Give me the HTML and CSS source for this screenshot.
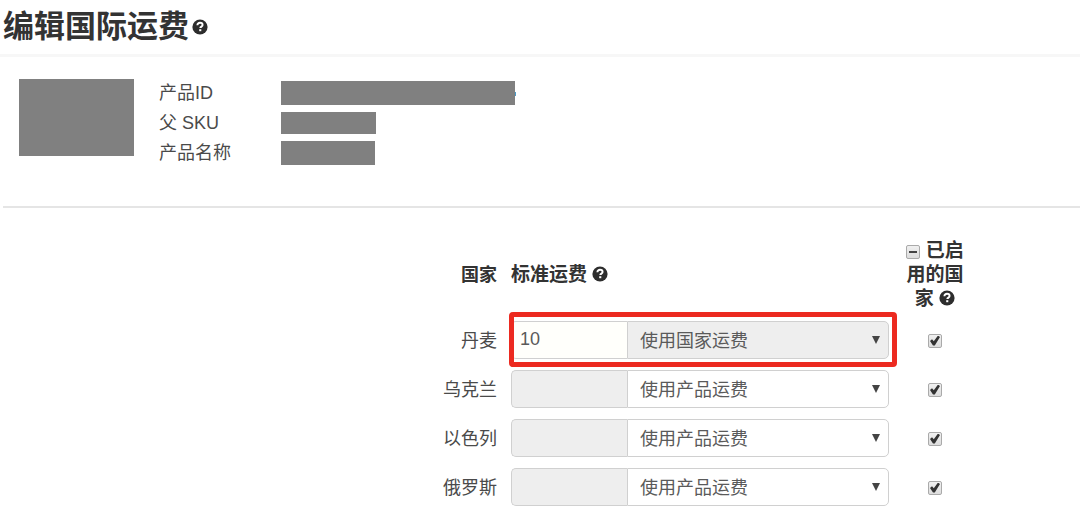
FILE: index.html
```html
<!DOCTYPE html>
<html lang="zh-CN">
<head>
    <meta charset="UTF-8">
    <meta name="viewport" content="width=device-width, initial-scale=1.0">
    <title>编辑国际运费</title>
    <link rel="stylesheet" href="styles.css">
</head>
<body>
    <svg class="icon-defs" aria-hidden="true">
        <symbol id="icon-help" viewBox="0 0 16 16">
            <circle cx="8" cy="8" r="7.6" fill="#2d2d2d"/>
            <path d="M5.4 6.3C5.4 4.7 6.5 3.8 8 3.8s2.6.9 2.6 2.2c0 1.6-2.3 1.6-2.3 3.1" fill="none" stroke="#fff" stroke-width="1.9"/>
            <rect x="7.2" y="10.2" width="2.1" height="2" fill="#fff"/>
        </symbol>
    </svg>

    <header class="page-header">
        <h1>编辑国际运费</h1>
        <svg class="help"><use href="#icon-help"/></svg>
    </header>

    <section class="product">
        <div class="product-image"></div>
        <dl class="product-info">
            <dt>产品ID</dt>
            <dd><span class="mask mask-id"></span></dd>
            <dt>父 SKU</dt>
            <dd><span class="mask mask-sku"></span></dd>
            <dt>产品名称</dt>
            <dd><span class="mask mask-name"></span></dd>
        </dl>
    </section>

    <table class="shipping">
        <thead>
            <tr>
                <th class="country">国家</th>
                <th class="price">标准运费 <svg class="help"><use href="#icon-help"/></svg></th>
                <th class="enabled"><input type="checkbox" class="check partial" id="all"> <label for="all">已启用的国家</label> <svg class="help"><use href="#icon-help"/></svg></th>
            </tr>
        </thead>
        <tbody>
            <tr>
                <td class="country"><label for="dk">丹麦</label></td>
                <td class="price">
                    <div class="input-group active">
                        <input type="text" id="dk" class="amount" value="10">
                        <div class="mode">
                            <select aria-label="丹麦运费"><option>使用国家运费</option><option>使用产品运费</option></select>
                        </div>
                    </div>
                </td>
                <td class="enabled"><input type="checkbox" class="check" aria-label="丹麦" checked></td>
            </tr>
            <tr>
                <td class="country"><label for="ua">乌克兰</label></td>
                <td class="price">
                    <div class="input-group">
                        <input type="text" id="ua" class="amount" disabled>
                        <div class="mode">
                            <select aria-label="乌克兰运费"><option>使用产品运费</option><option>使用国家运费</option></select>
                        </div>
                    </div>
                </td>
                <td class="enabled"><input type="checkbox" class="check" aria-label="乌克兰" checked></td>
            </tr>
            <tr>
                <td class="country"><label for="il">以色列</label></td>
                <td class="price">
                    <div class="input-group">
                        <input type="text" id="il" class="amount" disabled>
                        <div class="mode">
                            <select aria-label="以色列运费"><option>使用产品运费</option><option>使用国家运费</option></select>
                        </div>
                    </div>
                </td>
                <td class="enabled"><input type="checkbox" class="check" aria-label="以色列" checked></td>
            </tr>
            <tr>
                <td class="country"><label for="ru">俄罗斯</label></td>
                <td class="price">
                    <div class="input-group">
                        <input type="text" id="ru" class="amount" disabled>
                        <div class="mode">
                            <select aria-label="俄罗斯运费"><option>使用产品运费</option><option>使用国家运费</option></select>
                        </div>
                    </div>
                </td>
                <td class="enabled"><input type="checkbox" class="check" aria-label="俄罗斯" checked></td>
            </tr>
        </tbody>
    </table>
</body>
</html>
```

FILE: styles.css
```css
* {
    box-sizing: border-box;
}

body {
    margin: 0;
    font-family: "Liberation Sans", "Noto Sans CJK SC", sans-serif;
    font-size: 18px;
    line-height: 24px;
    color: #4a4a4a;
    background-color: #fff;
}

.icon-defs {
    display: none;
}

.help {
    width: 16px;
    height: 16px;
}

.page-header {
    display: flex;
    align-items: center;
    gap: 3px;
    padding: 5px 3px;
    border-bottom: 3px solid #f7f7f7;
}

h1 {
    margin: 0;
    font-size: 31px;
    line-height: 44px;
    color: #333;
}

.product {
    display: flex;
    gap: 25px;
    margin-left: 3px;
    padding: 21px 16px 38px;
    border-bottom: 2px solid #e5e5e5;
}

.product-image {
    width: 115px;
    height: 77px;
    margin-top: 1px;
    background-color: #808080;
}

.product-info {
    display: grid;
    grid-template-columns: 122px 1fr;
    grid-auto-rows: 30px;
    align-items: center;
    flex: 1;
    margin: 0;
}

.product-info dd {
    margin: 0;
}

.mask {
    display: block;
    height: 24px;
    background-color: #808080;
}

.mask-id {
    position: relative;
    width: 234px;
}

/* 遮挡块右侧露出的链接边缘 */
.mask-id::after {
    content: "";
    position: absolute;
    top: 11px;
    right: -1px;
    width: 1px;
    height: 4px;
    background-color: #4a9bc9;
}

.mask-sku {
    width: 95px;
    height: 22px;
}

.mask-name {
    width: 94px;
}

.shipping {
    width: 850px;
    max-width: 100%;
    margin: 30px auto 0;
    border-collapse: collapse;
}

.shipping th,
.shipping td {
    padding: 0;
}

.shipping th {
    height: 77px;
    padding-bottom: 3px;
    color: #333;
}

.shipping td {
    height: 49px;
}

.shipping .country {
    padding-right: 14px;
    text-align: right;
}

.shipping td.country {
    padding-top: 2px;
}

.shipping .price {
    width: 378px;
    text-align: left;
}

.shipping .enabled {
    width: 76px;
    padding-left: 16px;
    text-align: center;
}

.shipping th.price,
.shipping th.enabled {
    font-size: 19px;
}

.shipping .help {
    vertical-align: -1px;
}

.input-group {
    position: relative;
    display: flex;
    height: 38px;
}

/* 当前编辑行的红框 */
.input-group.active::after {
    content: "";
    position: absolute;
    inset: -9px -8px -8px -2px;
    border: 5px solid #ec2a20;
    border-radius: 4px;
    pointer-events: none;
}

.amount,
.mode select {
    height: 38px;
    border: 1px solid #d0d0d0;
    font: inherit;
    color: #5a5a5a;
    background-color: #fff;
}

.amount {
    width: 116px;
    padding: 0 8px;
    border-right: 0;
    border-radius: 5px 0 0 5px;
}

.amount:disabled {
    background-color: #eee;
}

.active .amount {
    background-color: #fffffb;
}

.mode {
    position: relative;
    flex: 1;
}

.mode select {
    width: 100%;
    padding: 2px 12px 0;
    border-radius: 0 5px 5px 0;
    appearance: none;
}

.active .mode select {
    background-color: #eee;
}

.mode::after {
    content: "";
    position: absolute;
    top: 15px;
    right: 9px;
    border: 4px solid transparent;
    border-top: 8px solid #444;
    border-bottom: 0;
    pointer-events: none;
}

.check {
    position: relative;
    width: 14px;
    height: 14px;
    margin: 0;
    border: 1px solid #aaa;
    border-radius: 2px;
    background: linear-gradient(#f0f0f0, #ddd);
    vertical-align: -2px;
    appearance: none;
}

.check:checked::before {
    content: "";
    position: absolute;
    inset: 1px;
    background-color: #333;
    clip-path: polygon(0 55%, 20% 38%, 38% 58%, 80% 0, 100% 14%, 48% 100%, 30% 100%);
}

.check.partial::before {
    content: "";
    position: absolute;
    inset: 5px 2px;
    background-color: #444;
}
```
